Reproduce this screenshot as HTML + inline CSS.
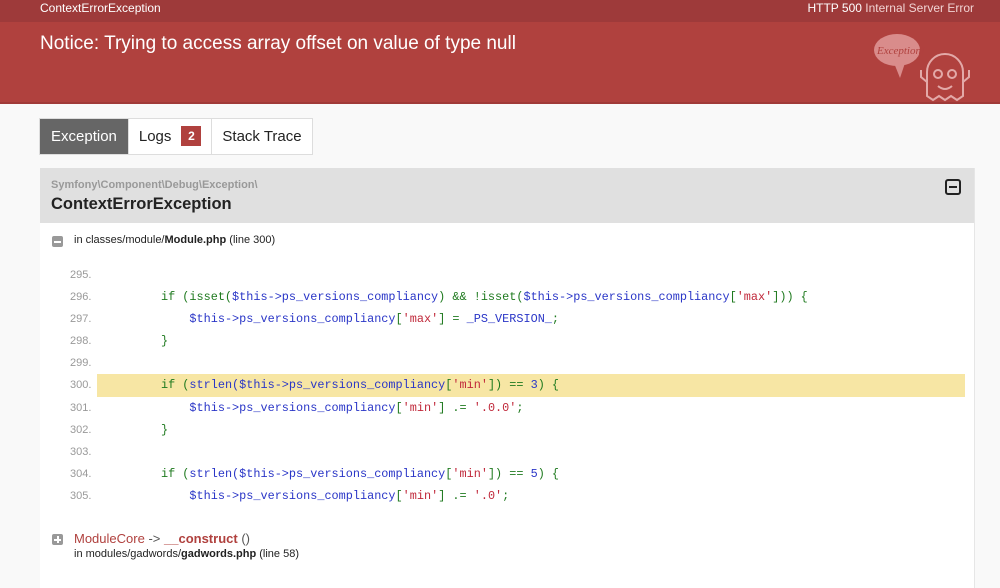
<!DOCTYPE html>
<html><head><meta charset="utf-8"><style>
*{margin:0;padding:0;box-sizing:border-box}
body{width:1000px;height:568px;overflow:hidden;background:#f9f9f9;font-family:"Liberation Sans",Arial,sans-serif;position:relative}
.top{position:absolute;left:0;top:0;width:1000px;height:22px;background:#9e3a3a;color:#f1d3d3;font-size:12px}
.top .l{position:absolute;left:40px;top:1px;color:#fff}
.top .r{position:absolute;right:26px;top:1px}
.top .r b{font-weight:normal;color:#fff}
.hdr{position:absolute;left:0;top:22px;width:1000px;height:82px;background:#b0413e;border-bottom:2px solid #a03a38}
.hdr h1{position:absolute;left:40px;top:11px;font-size:19px;font-weight:normal;color:#fff}
.tabs{position:absolute;left:39px;top:118px;height:37px;display:flex;border:1px solid #ddd;background:#fff}
.tab{font-size:15px;color:#222;padding:0 10px;line-height:35px;border-right:1px solid #ddd}
.tab.a{background:#666;color:#fff;padding:0 11px}
.badge{display:inline-block;background:#b0413e;color:#fff;font-size:12px;font-weight:bold;width:20px;height:20px;line-height:20px;text-align:center;margin-left:10px;vertical-align:1px}
.card{position:absolute;left:40px;top:168px;width:935px;height:420px;background:#fff;border-right:1px solid #e6e6e6}
.ch{height:55px;background:#e0e0e0;position:relative}
.ns{position:absolute;left:11px;top:11px;font-size:11px;font-weight:bold;color:#999}
.cn{position:absolute;left:11px;top:27px;font-size:16.5px;font-weight:bold;color:#222}
.tog{position:absolute;left:905px;top:11px;width:16px;height:16px;border:2px solid #222;border-radius:3px}
.tog:after{content:"";position:absolute;left:2px;right:2px;top:5px;height:2px;background:#222}
.f{position:absolute;font-size:11px;color:#222}
.ic{position:absolute;width:11px;height:11px;background:#999;border-radius:2px}
.ic:after{content:"";position:absolute;left:2px;right:2px;top:4.5px;height:2px;background:#fff}
.ic.p:before{content:"";position:absolute;top:2px;bottom:2px;left:4.5px;width:2px;background:#fff}
.code{position:absolute;left:57px;top:96px;width:868px}
.ln{height:22.1px;position:relative;font-family:"Liberation Mono",monospace;font-size:11.85px;line-height:22px;white-space:pre}
.ln .n{position:absolute;left:-27px;top:0;font-family:"Liberation Sans",sans-serif;font-size:11px;color:#999}
.ln.h{background:#f7e6a4}
.k{color:#1f7a1f}.v{color:#2a36c7}.s{color:#c0283a}
</style></head><body>
<div class="top"><span class="l">ContextErrorException</span><span class="r"><b>HTTP 500</b> Internal Server Error</span></div>
<div class="hdr"><h1>Notice: Trying to access array offset on value of type null</h1>
<svg style="position:absolute;left:870px;top:8px" width="115" height="78" viewBox="0 0 115 78">
<ellipse cx="27" cy="20" rx="23" ry="16" fill="#d98c8b"/><path d="M24 33 L30 48 L35 33Z" fill="#d98c8b"/>
<text x="7" y="24" font-family="Liberation Serif,serif" font-style="italic" font-size="11" fill="#b0413e">Exception!</text>
<g fill="none" stroke="#e3a9a8" stroke-width="2"><path d="M57 66 V42 a18 18 0 0 1 36 0 V66 l-6 4 -6 -4 -6 4 -6 -4 -6 4z"/>
<circle cx="68" cy="44" r="4"/><circle cx="82" cy="44" r="4"/><path d="M68 56 q7 6 14 0"/>
<path d="M57 52 l-6 -5 v-7 M93 52 l6 -5 v-7"/></g></svg>
</div>
<div class="tabs"><div class="tab a">Exception</div><div class="tab">Logs<span class="badge">2</span></div><div class="tab" style="border-right:0">Stack Trace</div></div>
<div class="card">
<div class="ch"><div class="ns">Symfony\Component\Debug\Exception\</div><div class="cn">ContextErrorException</div><div class="tog"></div></div>
<div class="ic" style="left:12px;top:68px"></div>
<div class="f" style="left:34px;top:66px">in classes/module/<b>Module.php</b> (line 300)</div>
<div class="code">
<div class="ln"><span class="n">295.</span></div>
<div class="ln"><span class="n">296.</span>         <span class="k">if (isset(</span><span class="v">$this-&gt;ps_versions_compliancy</span><span class="k">) &amp;&amp; !isset(</span><span class="v">$this-&gt;ps_versions_compliancy</span><span class="k">[</span><span class="s">'max'</span><span class="k">])) {</span></div>
<div class="ln"><span class="n">297.</span>             <span class="v">$this-&gt;ps_versions_compliancy</span><span class="k">[</span><span class="s">'max'</span><span class="k">] = </span><span class="v">_PS_VERSION_</span><span class="k">;</span></div>
<div class="ln"><span class="n">298.</span>         <span class="k">}</span></div>
<div class="ln"><span class="n">299.</span></div>
<div class="ln h"><span class="n">300.</span>         <span class="k">if (</span><span class="v">strlen($this-&gt;ps_versions_compliancy</span><span class="k">[</span><span class="s">'min'</span><span class="k">]) == </span><span class="v">3</span><span class="k">) {</span></div>
<div class="ln"><span class="n">301.</span>             <span class="v">$this-&gt;ps_versions_compliancy</span><span class="k">[</span><span class="s">'min'</span><span class="k">] .= </span><span class="s">'.0.0'</span><span class="k">;</span></div>
<div class="ln"><span class="n">302.</span>         <span class="k">}</span></div>
<div class="ln"><span class="n">303.</span></div>
<div class="ln"><span class="n">304.</span>         <span class="k">if (</span><span class="v">strlen($this-&gt;ps_versions_compliancy</span><span class="k">[</span><span class="s">'min'</span><span class="k">]) == </span><span class="v">5</span><span class="k">) {</span></div>
<div class="ln"><span class="n">305.</span>             <span class="v">$this-&gt;ps_versions_compliancy</span><span class="k">[</span><span class="s">'min'</span><span class="k">] .= </span><span class="s">'.0'</span><span class="k">;</span></div>
</div>
<div class="ic p" style="left:12px;top:366px"></div>
<div class="f" style="left:34px;top:363px;font-size:13px"><span style="color:#b0413e">ModuleCore</span> <span style="color:#555">-&gt;</span> <b style="color:#b0413e">__construct</b> <span style="color:#555">()</span></div>
<div class="f" style="left:34px;top:380px">in modules/gadwords/<b>gadwords.php</b> (line 58)</div>
</div>
</body></html>
